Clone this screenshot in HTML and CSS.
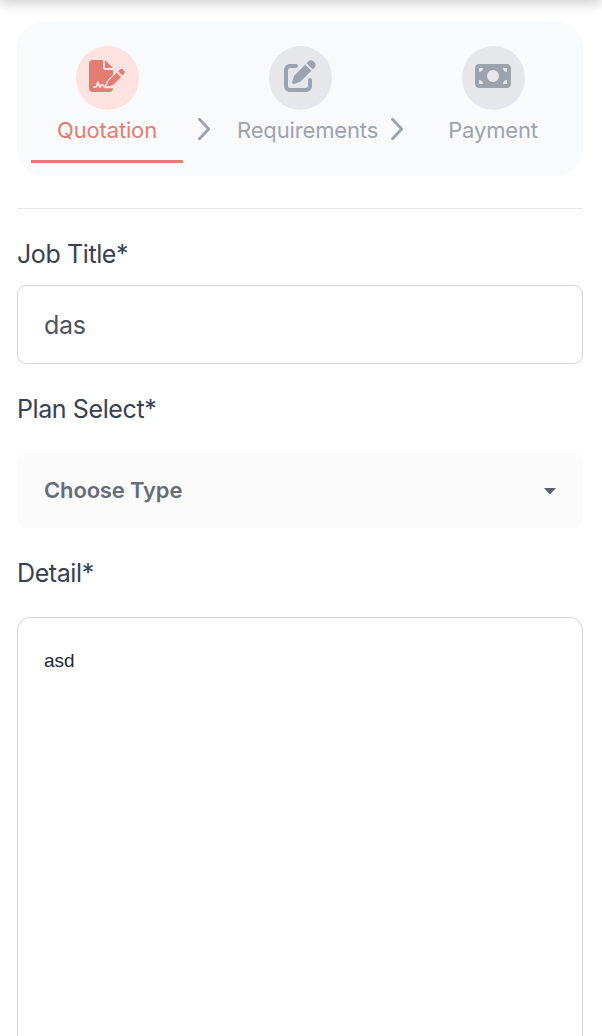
FILE: index.html
```html
<!DOCTYPE html>
<html lang="en">
<head>
<meta charset="utf-8">
<title>Quotation</title>
<link rel="stylesheet" href="styles.css">
</head>
<body>
<div class="topbar"></div>
<main class="page">
  <nav class="steps">
    <div class="step step-active">
      <span class="step-icon"><svg width="36" height="32" viewBox="0 0 36 32"><path d="M4 0H14V8.2A1.8 1.8 0 0 0 15.8 10H24V28A4 4 0 0 1 20 32H4A4 4 0 0 1 0 28V4A4 4 0 0 1 4 0ZM16 0 24 8H16Z"/><path class="cut" d="M28.1 12.2 19.6 20.7Q17 23.8 16.6 27.2L24.5 27.2 32.7 16.9Z"/><path class="ink" d="M5 27.2H6Q7.3 27.2 7.8 25.6L9 22.1 10.8 27.2 12.5 24.8Q13.7 24.2 14.4 25.7 15 27.2 16.3 27.2H24.5"/><path d="M27.6 12.8 32.1 17.2 24.2 24.8Q22 26.3 17.6 26.2 18 22.8 19.9 20.5Z"/><path d="M29.1 11.3 31 9.4Q32.4 8.1 34 9.5L34.9 10.4Q36.5 12 35.1 13.7L33.4 15.6Z"/></svg></span>
      <span class="step-label">Quotation</span>
    </div>
    <svg class="chevron" width="15" height="24" viewBox="0 0 15 24"><path d="M2.5 2.3 11.7 12 2.5 21.7"/></svg>
    <div class="step">
      <span class="step-icon"><svg width="32" height="32" viewBox="0 0 512 512"><path d="M471.6 21.7c-21.9-21.9-57.3-21.9-79.2 0L362.3 51.7l97.9 97.9 30.1-30.1c21.9-21.9 21.9-57.3 0-79.2L471.6 21.7zm-299.2 220c-6.1 6.1-10.8 13.6-13.5 21.9l-29.6 88.8c-2.9 8.6-.6 18.1 5.8 24.6s15.9 8.7 24.6 5.8l88.8-29.6c8.2-2.7 15.7-7.4 21.9-13.5L437.7 172.3 339.7 74.3 172.4 241.7zM96 64C43 64 0 107 0 160V416c0 53 43 96 96 96H352c53 0 96-43 96-96V320c0-17.7-14.3-32-32-32s-32 14.3-32 32v96c0 17.7-14.3 32-32 32H96c-17.7 0-32-14.3-32-32V160c0-17.7 14.3-32 32-32h96c17.7 0 32-14.3 32-32s-14.3-32-32-32H96z"/></svg></span>
      <span class="step-label">Requirements</span>
    </div>
    <svg class="chevron" width="15" height="24" viewBox="0 0 15 24"><path d="M2.5 2.3 11.7 12 2.5 21.7"/></svg>
    <div class="step">
      <span class="step-icon"><svg width="36" height="32" viewBox="0 0 576 512"><path fill-rule="evenodd" d="M64 64C28.7 64 0 92.7 0 128V384c0 35.3 28.7 64 64 64H512c35.3 0 64-28.7 64-64V128c0-35.3-28.7-64-64-64H64zm64 320H64V320c35.3 0 64 28.7 64 64zM64 192V128h64c0 35.3-28.7 64-64 64zM448 384c0-35.3 28.7-64 64-64v64H448zm64-192c-35.3 0-64-28.7-64-64h64v64zM288 160a96 96 0 1 1 0 192 96 96 0 1 1 0-192z"/></svg></span>
      <span class="step-label">Payment</span>
    </div>
  </nav>
  <form class="form">
    <label class="label label-title" for="title">Job Title*</label>
    <input class="input" id="title" type="text" value="das">
    <span class="label label-plan">Plan Select*</span>
    <button class="select" type="button"><span>Choose Type</span><svg width="12" height="7" viewBox="0 0 12 7"><path d="M0 0H12L6 6.5Z"/></svg></button>
    <label class="label label-detail" for="detail">Detail*</label>
    <textarea class="textarea" id="detail">asd</textarea>
  </form>
</main>
</body>
</html>
```
FILE: styles.css
```css
* { box-sizing: border-box; }
body {
  margin: 0;
  height: 1036px;
  overflow: hidden;
  background: #fff;
  color: #374151;
  font-family: Inter, "Liberation Sans", sans-serif;
}
.topbar {
  height: 10px;
  margin-top: -10px;
  background: #fff;
  box-shadow: 0 1px 14px rgba(0, 0, 0, 0.3);
}
.page { padding: 21px 19px 0 17px; }
.steps {
  display: flex;
  height: 155px;
  padding: 25px 14px 0;
  border-radius: 27px;
  background: #f9fafc;
  color: #9ca3af;
}
.step {
  display: flex;
  flex: none;
  flex-direction: column;
  width: 152px;
  height: 117px;
  padding: 0 13px;
}
.step-active {
  color: #e37c72;
  border-bottom: 3px solid #e37c72;
}
.step-icon {
  display: flex;
  justify-content: center;
  align-self: center;
  width: 63px;
  height: 63.5px;
  padding-top: 13.5px;
  border-radius: 50%;
  background: #e5e7eb;
}
.step-active .step-icon { background: #fee2e2; }
.step-icon svg { fill: currentColor; }
.step-icon .cut {
  fill: #fee2e2;
  stroke: #fee2e2;
  stroke-width: 2;
}
.step-icon .ink {
  fill: none;
  stroke: #fee2e2;
  stroke-width: 1.8;
  stroke-linecap: round;
  stroke-linejoin: round;
}
.step-label {
  margin-top: 4.5px;
  font-size: 22px;
  line-height: 32px;
  letter-spacing: -0.15px;
  text-align: center;
  white-space: nowrap;
}
.chevron {
  flex: none;
  margin: 71px 12px 0 14px;
  fill: none;
  stroke: currentColor;
  stroke-width: 2.9;
  stroke-linecap: round;
  stroke-linejoin: round;
}
.form {
  display: flex;
  flex-direction: column;
  margin-top: 32px;
  border-top: 1px solid #e5e7eb;
}
.label {
  font-size: 25px;
  line-height: 36px;
  letter-spacing: -0.4px;
}
.label-title { margin-top: 27px; }
.label-plan { margin-top: 27px; }
.label-detail { margin-top: 27px; }
.input {
  height: 79px;
  margin: 13px 0 0;
  padding: 0 26px;
  border: 1.5px solid #d1d5db;
  border-radius: 9px;
  background: #fff;
  color: #4b5563;
  font: 25px Inter, sans-serif;
  letter-spacing: -0.3px;
}
.select {
  display: flex;
  align-items: center;
  justify-content: space-between;
  height: 75px;
  margin-top: 26px;
  padding: 0 27px 2px;
  border: 0;
  border-radius: 11px;
  background: #fbfbfb;
  color: #666d78;
  font: 600 22px Inter, sans-serif;
  letter-spacing: -0.15px;
}
.select svg {
  margin-top: 3px;
  fill: #5b626d;
}
.textarea {
  height: 450px;
  margin: 26px 0 0;
  padding: 30px 26px;
  border: 1.5px solid #d1d5db;
  border-radius: 13px;
  background: #fff;
  color: #1f2937;
  font: 19px/26px "Liberation Sans", sans-serif;
  resize: none;
}
```
